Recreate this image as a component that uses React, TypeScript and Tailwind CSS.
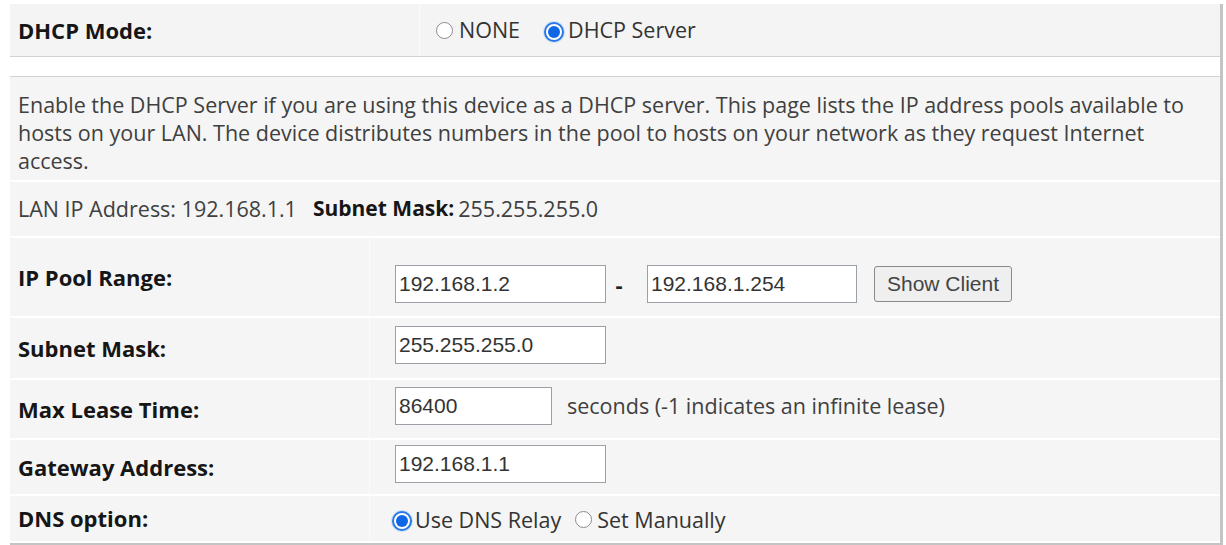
import React from "react";

const sans = "font-['Open_Sans','Noto_Sans',sans-serif]";
const arial = "font-['Liberation_Sans',Arial,sans-serif]";

function Radio({ checked }: { checked?: boolean }) {
  return checked ? (
    <span className="inline-flex w-[20px] h-[20px] rounded-full border-2 border-[#2a78e4] bg-white items-center justify-center shrink-0 shadow-[0_0_0_1px_#cfe0f7]">
      <span className="w-[12px] h-[12px] rounded-full bg-[#0f67e6]" />
    </span>
  ) : (
    <span className="inline-block w-[17px] h-[17px] rounded-full border border-[#8c8c8c] bg-white shrink-0" />
  );
}

function TextBox({ value, w, up }: { value: string; w: string; up?: boolean }) {
  return (
    <div
      className={`${w} h-[38px] border border-[#9aa0a6] bg-white flex items-center pl-[3px] text-[21px] text-[#333] ${arial} ${up ? "mb-[6px]" : ""}`}
    >
      {value}
    </div>
  );
}

function FieldRow({ label, h, children }: { label: string; h: string; children: React.ReactNode }) {
  return (
    <div className={`flex ${h} bg-[#f5f5f5]`}>
      <div className="w-[360px] flex items-center pl-[8px] border-r border-[#fbfbfb]">
        <span className="font-bold text-[22px] text-[#161616]">{label}</span>
      </div>
      <div className="flex-1 flex items-center pl-[25px]">{children}</div>
    </div>
  );
}

export default function App() {
  return (
    <div className={`w-[1226px] h-[545px] bg-white overflow-hidden pl-[10px] pt-[4px] ${sans}`}>
      <div className="w-[1213px] h-[541px] border-r-[3px] border-b-2 border-[#c4c4c4] flex flex-col">
        {/* mode */}
        <div className="flex h-[53px] bg-[#f4f4f4] border-b border-[#d2d2d2]">
          <div className="w-[410px] flex items-center pl-[8px] border-r border-[#fbfbfb]">
            <span className="font-bold text-[22px] text-[#161616]">DHCP Mode:</span>
          </div>
          <div className="flex-1 flex items-center pl-[16px] text-[21.5px] text-[#333]">
            <Radio />
            <span className="ml-[6px]">NONE</span>
            <span className="ml-[24px]"><Radio checked /></span>
            <span className="ml-[4px]">DHCP Server</span>
          </div>
        </div>
        <div className="h-[20px] bg-white border-b border-[#d2d2d2]" />

        <div className="flex flex-col gap-[2px] bg-white">
          <div className="h-[103px] bg-[#f5f5f5] pl-[8px] pt-[14px] text-[21.5px] leading-[28px] text-[#404040]">
            Enable the DHCP Server if you are using this device as a DHCP server. This page lists the IP address pools available to
            <br />
            hosts on your LAN. The device distributes numbers in the pool to hosts on your network as they request Internet
            <br />
            access.
          </div>

          <div className="h-[54px] bg-[#f5f5f5] pl-[8px] flex items-center text-[21.5px] text-[#404040]">
            <span>LAN IP Address: 192.168.1.1</span>
            <span className="ml-[16px] font-bold text-[21px] text-[#161616]">Subnet Mask:</span>
            <span className="ml-[4px]">255.255.255.0</span>
          </div>

          <FieldRow label="IP Pool Range:" h="h-[78px]">
            <div className="flex items-center mt-[14px]">
              <TextBox value="192.168.1.2" w="w-[211px]" />
              <span className="ml-[7px] w-[12px] text-center font-bold text-[22px] text-[#222]">-</span>
              <span className="ml-[22px]">
                <TextBox value="192.168.1.254" w="w-[210px]" />
              </span>
              <button
                className={`ml-[17px] h-[36px] px-[12px] rounded-[3px] border border-[#8a8a8a] bg-[#efefef] text-[21px] text-[#444] ${arial}`}
              >
                Show Client
              </button>
            </div>
          </FieldRow>

          <FieldRow label="Subnet Mask:" h="h-[60px]">
            <TextBox value="255.255.255.0" w="w-[211px]" up />
          </FieldRow>

          <FieldRow label="Max Lease Time:" h="h-[58px]">
            <TextBox value="86400" w="w-[157px]" up />
            <span className="ml-[15px] mb-[6px] text-[21.5px] text-[#404040]">seconds (-1 indicates an infinite lease)</span>
          </FieldRow>

          <FieldRow label="Gateway Address:" h="h-[54px]">
            <TextBox value="192.168.1.1" w="w-[211px]" up />
          </FieldRow>

          <FieldRow label="DNS option:" h="h-[45px]">
            <div className="flex items-center text-[21.5px] text-[#333] -ml-[3px] mt-[4px]">
              <Radio checked />
              <span className="ml-[3px]">Use DNS Relay</span>
              <span className="ml-[14px]"><Radio /></span>
              <span className="ml-[5px]">Set Manually</span>
            </div>
          </FieldRow>
        </div>
      </div>
    </div>
  );
}
